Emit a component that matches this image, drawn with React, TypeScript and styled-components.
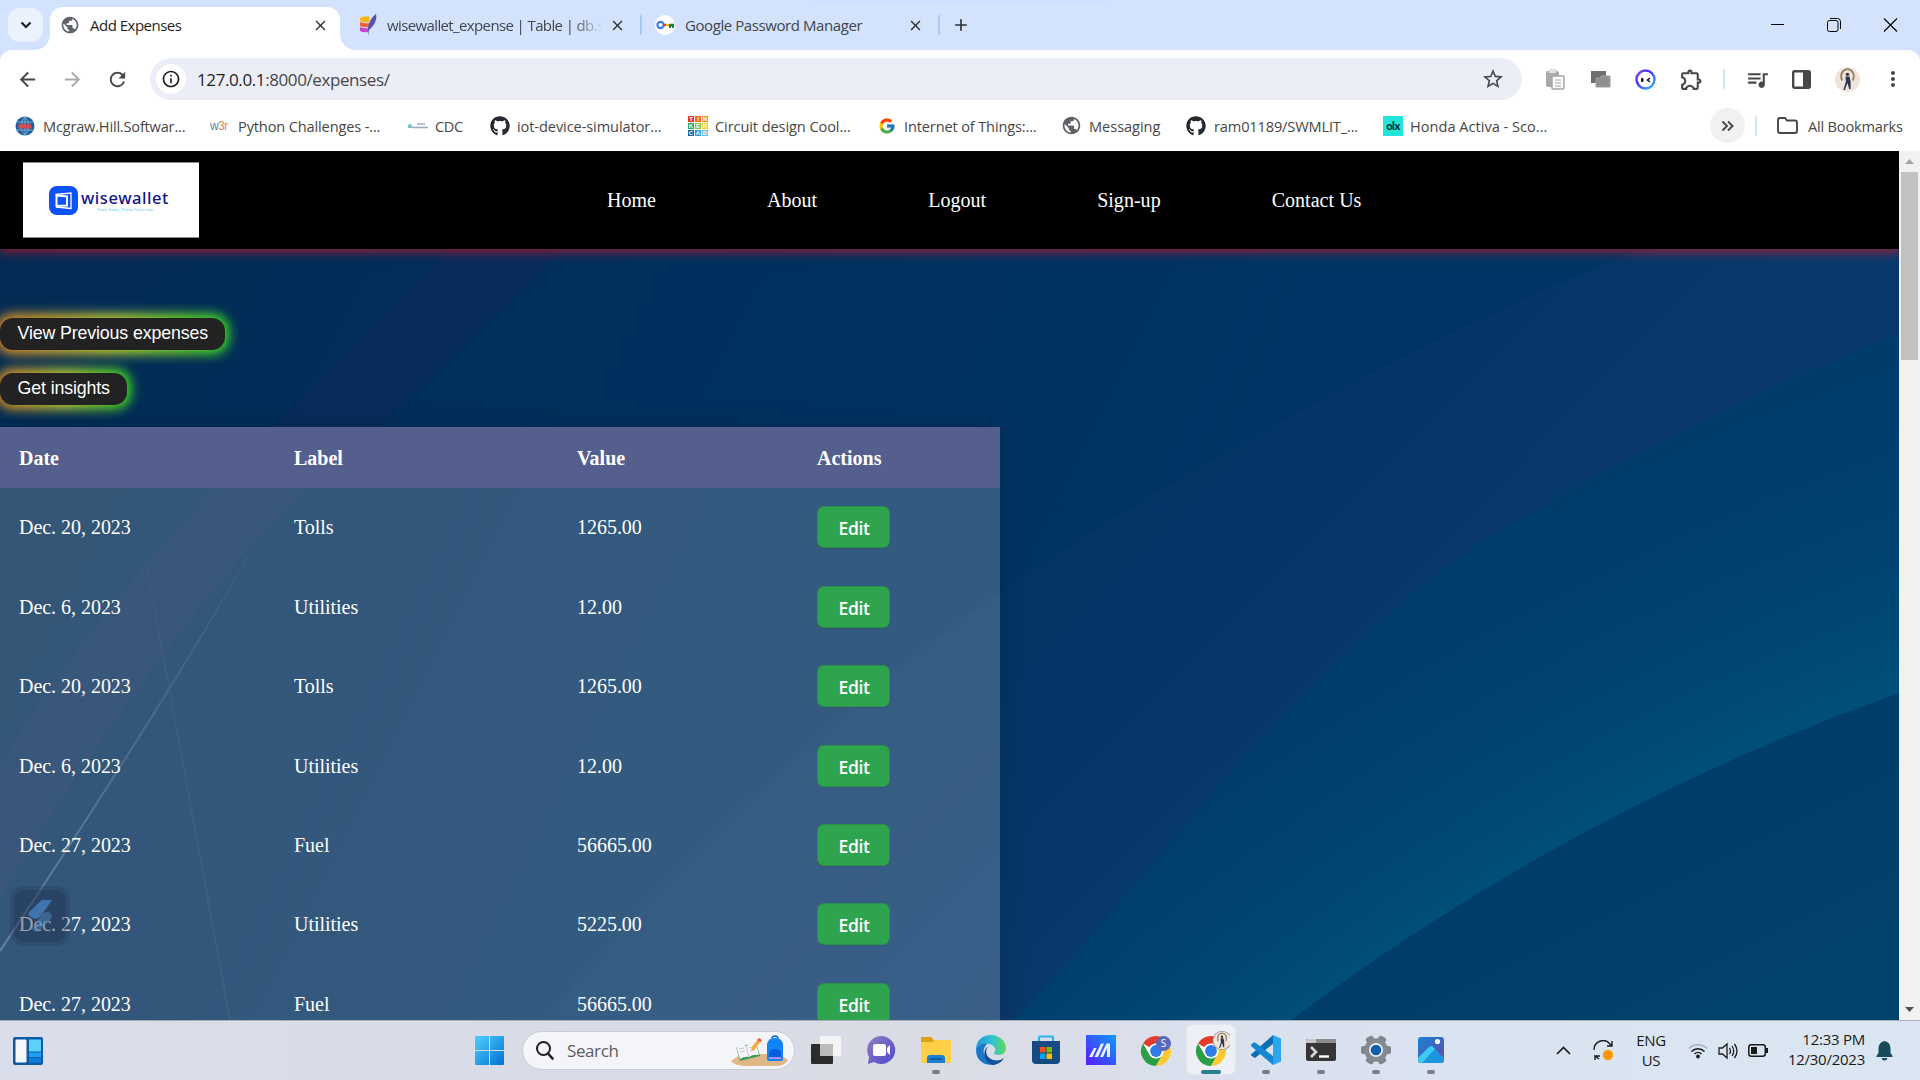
import React from 'react';
import styled, { createGlobalStyle, css } from 'styled-components';
import {
  MdArrowBack, MdArrowForward, MdRefresh, MdInfoOutline, MdStarBorder, MdOutlineExtension,
  MdQueueMusic, MdMoreVert, MdPublic, MdClose, MdAdd,
} from 'react-icons/md';
import { FaGithub } from 'react-icons/fa';
import { FcGoogle } from 'react-icons/fc';

const ui = `"Open Sans", "Noto Sans", sans-serif`;
const serif = `"Liberation Serif", "Times New Roman", serif`;

const Global = createGlobalStyle`
  * { box-sizing: border-box; }
  body { margin: 0; background: #d3e3fd; overflow: hidden; }
  svg { display: block; flex: none; }
  button { font: inherit; color: inherit; border: 0; background: none; padding: 0; }
`;

const Screen = styled.div`
  width: 1920px;
  height: 1080px;
  display: flex;
  flex-direction: column;
  overflow: hidden;
  font-family: ${ui};
  background: #d3e3fd;
`;

/* ---------- tab strip ---------- */
const TabStrip = styled.div`
  height: 50px;
  display: flex;
  align-items: center;
  padding-left: 8px;
  position: relative;
  &::after {
    content: '';
    position: absolute;
    left: 815px;
    top: 0;
    width: 290px;
    height: 3px;
    border-radius: 0 0 12px 12px;
    background: #cbdbf6;
    opacity: 0.6;
  }
`;
const TabSearch = styled.button`
  width: 35px;
  height: 34px;
  border-radius: 12px;
  background: #ebf2fe;
  display: grid;
  place-items: center;
`;
const Tab = styled.div<{ $w: number; $end?: number; $active?: boolean }>`
  width: ${p => p.$w}px;
  height: 43px;
  align-self: flex-end;
  display: flex;
  align-items: center;
  padding: 0 ${p => p.$end ?? 11}px 7px 10px;
  color: ${p => (p.$active ? '#1f1f1f' : '#41454c')};
  position: relative;
  ${p => p.$active && css`
    margin-left: 7px;
    background: #fff;
    border-radius: 13px 13px 0 0;
    &::before, &::after {
      content: '';
      position: absolute;
      bottom: 0;
      width: 15px;
      height: 15px;
    }
    &::before { right: 100%; background: radial-gradient(circle at 0 0, transparent 14.5px, #fff 15px); }
    &::after { left: 100%; background: radial-gradient(circle at 100% 0, transparent 14.5px, #fff 15px); }
  `}
`;
const TabTitle = styled.span<{ $ls: number; $fade?: boolean }>`
  flex: 1;
  margin-left: 10px;
  font-size: 15px;
  letter-spacing: ${p => p.$ls}px;
  white-space: nowrap;
  ${p => p.$fade && css`mask-image: linear-gradient(90deg, #000 186px, transparent 216px);`}
`;
const Divider = styled.i<{ $h?: number; $m?: string; $c?: string }>`
  width: 2px;
  height: ${p => p.$h ?? 20}px;
  margin: ${p => p.$m ?? '0'};
  background: ${p => p.$c ?? '#a8c7fa'};
  border-radius: 1px;
  flex: none;
`;
const WindowButtons = styled.div`
  margin-left: auto;
  display: flex;
  gap: 42px;
  padding-right: 22px;
`;

/* ---------- toolbar ---------- */
const Toolbar = styled.div`
  height: 58px;
  background: #fff;
  border-radius: 12px 12px 0 0;
  display: flex;
  align-items: center;
  padding-left: 16px;
  color: #474747;
`;
const NavIcons = styled.div`
  display: flex;
  gap: 22px;
  width: 134px;
`;
const Omnibox = styled.div`
  width: 1372px;
  height: 42px;
  border-radius: 21px;
  background: #ebeef7;
  display: flex;
  align-items: center;
  padding: 0 17px 0 6px;
`;
const InfoBadge = styled.span`
  width: 30px;
  height: 30px;
  border-radius: 50%;
  background: #fff;
  display: grid;
  place-items: center;
  color: #1f1f1f;
`;
const Url = styled.span`
  flex: 1;
  margin-left: 11px;
  font-size: 17px;
  letter-spacing: -0.4px;
  color: #474747;
  b { font-weight: 400; color: #1f1f1f; }
`;
const Extensions = styled.div`
  display: flex;
  align-items: center;
  padding-left: 22px;
`;
const Slot = styled.span<{ $w: number }>`
  width: ${p => p.$w}px;
  display: flex;
  justify-content: center;
  flex: none;
`;

/* ---------- bookmarks ---------- */
const Bookmarks = styled.div`
  height: 43px;
  background: #fff;
  display: flex;
  align-items: center;
  padding: 0 0 8px 15px;
  font-size: 14.6px;
  color: #474747;
`;
const Bookmark = styled.div<{ $w: number; $ls?: number; $gap?: number }>`
  width: ${p => p.$w}px;
  display: flex;
  align-items: center;
  gap: ${p => p.$gap ?? 8}px;
  line-height: 18px;
  white-space: nowrap;
  letter-spacing: ${p => p.$ls ?? -0.15}px;
`;
const More = styled.button`
  width: 35px;
  height: 35px;
  margin-left: auto;
  border-radius: 50%;
  background: #f1f1f1;
  display: grid;
  place-items: center;
`;
const W3r = styled.span`
  width: 20px;
  font: 12px "Liberation Sans", sans-serif;
  letter-spacing: -0.5px;
  color: #4a7fc0;
  em { font-style: normal; color: #ee8146; }
`;
const Tinker = styled.span`
  width: 20px;
  height: 20px;
  display: grid;
  grid-template-columns: repeat(3, 1fr);
  gap: 1px;
  font: bold 6px/6px "Liberation Sans", sans-serif;
  letter-spacing: 0;
  color: #fff;
  text-align: center;
`;
const TinkerCell = styled.i<{ $c: string }>`
  font-style: normal;
  background: ${p => p.$c};
`;
const Olx = styled.span`
  width: 20px;
  height: 20px;
  background: #23e5db;
  color: #002f34;
  font: 900 11px/19px "Lato", sans-serif;
  letter-spacing: -0.5px;
  text-align: center;
`;

/* ---------- web page ---------- */
const Viewport = styled.div`
  height: 869px;
  display: flex;
  overflow: hidden;
`;
const Page = styled.main`
  width: 1899px;
  position: relative;
  overflow: hidden;
  font-family: ${serif};
  font-size: 20px;
  color: #fff;
  isolation: isolate;
`;
const Wallpaper = styled.svg`
  position: absolute;
  inset: 0;
  z-index: -1;
`;
const Navbar = styled.nav`
  height: 98px;
  background: #000;
  box-shadow: 0 2px 10px 1px rgba(210, 20, 40, 0.7);
  display: flex;
  align-items: center;
  padding-left: 23px;
`;
const Logo = styled.div`
  width: 176px;
  height: 76px;
  background: #fff;
  border: solid #8a8a8a;
  border-width: 1px 0;
  display: flex;
  align-items: center;
  padding: 1px 0 0 26px;
`;
const LogoWords = styled.div`
  margin: 0 0 0 3px;
  display: flex;
  flex-direction: column;
  font-family: "Noto Sans", sans-serif;
`;
const LogoName = styled.span`
  font-size: 16.5px;
  line-height: 18px;
  font-weight: 500;
  letter-spacing: 0.55px;
  color: #14148a;
`;
const LogoTag = styled.span`
  margin-left: 16px;
  font-size: 4px;
  line-height: 5px;
  color: #5cc8f5;
  white-space: nowrap;
`;
const Links = styled.div`
  display: flex;
  gap: 111px;
  margin: 1px 0 0 408px;
`;
const NavLink = styled.a`
  white-space: nowrap;
  letter-spacing: 0.03px;
`;
const Actions = styled.div`
  padding-top: 69px;
  height: 178px;
  display: flex;
  flex-direction: column;
  align-items: flex-start;
  gap: 23px;
`;
const GlowButton = styled.button<{ $w: number }>`
  width: ${p => p.$w}px;
  height: 32px;
  flex: none;
  border-radius: 13px;
  background: #222;
  font: 17.8px/30px "Liberation Sans", Arial, sans-serif;
  padding: 0 0 2px 17.6px;
  text-align: left;
  white-space: nowrap;
  letter-spacing: -0.14px;
  position: relative;
  &::before {
    content: '';
    position: absolute;
    inset: -4px;
    z-index: -1;
    border-radius: 16px;
    background: linear-gradient(90deg, #e8871e, #c8d62b 50%, #35e01c);
    filter: blur(6px);
  }
`;
const Table = styled.table`
  width: 1000px;
  border-collapse: collapse;
  table-layout: fixed;
  box-shadow: 0 0 25px rgba(0, 0, 0, 0.15);
  background: rgba(255, 255, 255, 0.2);
`;
const HeadCell = styled.th<{ $w?: number }>`
  width: ${p => (p.$w ? `${p.$w}px` : 'auto')};
  height: 61px;
  padding: 1px 0 0 19px;
  text-align: left;
  background: #555f8e;
`;
const Cell = styled.td`
  height: 79.45px;
  padding: 0 0 0 19px;
  letter-spacing: -0.03px;
`;
const EditButton = styled.button`
  display: block;
  width: 73px;
  height: 42px;
  margin-top: -1px;
  border-radius: 7px;
  border: 1px solid rgba(27, 31, 35, 0.15);
  box-shadow: 0 1px 0 rgba(27, 31, 35, 0.1);
  background: #2ea44f;
  font: 600 17.5px/40px ${ui};
  letter-spacing: -0.4px;
  padding: 1px 0 0 1px;
`;
const FloatingTool = styled.div`
  position: absolute;
  left: 10px;
  top: 735px;
  width: 60px;
  height: 60px;
  border-radius: 14px;
  border: 4px solid rgba(35, 55, 88, 0.3);
  background: rgba(28, 44, 74, 0.45);
  background-clip: padding-box;
  display: grid;
  place-items: center;
`;
const Scrollbar = styled.div`
  width: 21px;
  background: #f1f1f1;
  display: flex;
  flex-direction: column;
  align-items: center;
`;
const ScrollArrow = styled.span<{ $c: string; $up?: boolean }>`
  height: 21px;
  display: grid;
  place-items: center;
  margin-top: ${p => (p.$up ? 0 : 'auto')};
  color: ${p => p.$c};
`;
const Thumb = styled.div`
  width: 17px;
  height: 188px;
  background: #c1c1c1;
`;

/* ---------- taskbar ---------- */
const Taskbar = styled.footer`
  height: 60px;
  border-top: 1px solid #a9adb8;
  background: linear-gradient(90deg, #d9deea 0%, #d8dce7 30%, #dadce5 48%, #dae0ed 62%, #dae5f2 85%, #dbe6f2 100%);
  display: flex;
  align-items: center;
  color: #1b1b1b;
`;
const StartArea = styled.div`
  width: 475px;
  padding-left: 13px;
`;
const Search = styled.div`
  width: 273px;
  height: 39px;
  margin: 0 0 0 18px;
  border-radius: 20px;
  background: #f4f5f8;
  border: 1px solid #c9ccd5;
  display: flex;
  align-items: center;
  padding: 0 6px 0 12px;
  font-size: 17px;
  color: #5d5d5f;
  span { flex: 1; margin-left: 13px; letter-spacing: -0.4px; }
`;
const TaskButton = styled.div<{ $active?: boolean }>`
  width: 48px;
  height: 49px;
  margin: 0 0 2px 7px;
  border-radius: 6px;
  flex: none;
  display: grid;
  place-items: center;
  position: relative;
  ${p => p.$active && css`background: #edf0f6; box-shadow: 0 0 0 1px #e3e6ed;`}
`;
const Dot = styled.i<{ $active?: boolean }>`
  position: absolute;
  bottom: 0;
  left: ${p => (p.$active ? 14 : 20)}px;
  width: ${p => (p.$active ? 20 : 8)}px;
  height: 4px;
  border-radius: 2px;
  background: ${p => (p.$active ? '#25808f' : '#7b7d82')};
`;
const Tray = styled.div`
  margin-left: auto;
  padding-right: 27px;
  display: flex;
  align-items: center;
  font-size: 15px;
  line-height: 20px;
`;
const Lang = styled.div`
  width: 40px;
  margin: 0 17px 0 -4px;
  padding-bottom: 2px;
  text-align: center;
  letter-spacing: -0.4px;
`;
const Clock = styled.div`
  width: 86px;
  margin: 0 11px 0 10px;
  padding-bottom: 3px;
  text-align: right;
  white-space: nowrap;
  letter-spacing: -0.25px;
`;

/* ---------- drawings ---------- */
const Chrome = ({ children }: { children?: React.ReactNode }) => (
  <svg width="38" height="38" viewBox="-4 -5 38 38">
    <circle cx="15" cy="15" r="15" fill="#fff" />
    <path d="M15 15 2 7.500A15 15 0 0 1 28 7.500H15A7.500 7.500 0 0 0 8.500 11Z" fill="#e33b2e" />
    <path d="M2 7.500A15 15 0 0 0 15 30L21.500 18.750A7.500 7.500 0 0 1 8.500 18.750Z" fill="#2a9d47" />
    <path d="M28 7.500A15 15 0 0 1 15 30L21.500 18.750A7.500 7.500 0 0 0 15 7.500Z" fill="#fcc934" />
    <circle cx="15" cy="15" r="7.300" fill="#fff" />
    <circle cx="15" cy="15" r="5.900" fill="#2f7de9" />
    {children}
  </svg>
);

const Person = ({ x, y, r }: { x: number; y: number; r: number }) => (
  <g transform={`translate(${x} ${y}) scale(${r / 12})`}>
    <circle r="12" fill="#efe3dc" />
    <path d="M-5 1C-8-5-4-10-0-10S8-5 5 1" fill="none" stroke="#8b8462" strokeWidth="1.800" />
    <circle cy="-5" r="1.600" fill="#3b2a25" />
    <path d="M-2-3 2-3 3 2 3 9 1.500 9 0 3-2.500 10-4 10-1.500 2Z" fill="#2d3654" />
  </g>
);

const taskApps: { id: string; dot?: boolean; active?: boolean; icon: React.ReactNode }[] = [
  { id: 'taskview', icon: (
    <svg width="32" height="30"><rect x="1" y="9" width="22" height="20" rx="1" fill="#2c2c2b" /><rect x="10" y="1" width="21" height="20" rx="1" fill="#f4f4f5" /><rect x="10" y="9" width="13" height="12" fill="#bcbcbc" /></svg>) },
  { id: 'chat', icon: (
    <svg width="30" height="30"><defs><linearGradient id="ch" x2="1" y2="1"><stop stopColor="#8d82c2" /><stop offset=".6" stopColor="#6a5cc8" /><stop offset="1" stopColor="#4750c4" /></linearGradient></defs>
      <path d="M15 1a14 14 0 1 1-7 26L2 29 3 22A14 14 0 0 1 15 1Z" fill="url(#ch)" /><rect x="7" y="9" width="13" height="12" rx="2" fill="#fff" /><path d="m21 13 3-3v10l-3-3Z" fill="#fff" /></svg>) },
  { id: 'explorer', dot: true, icon: (
    <svg width="30" height="28"><path d="M0 2Q0 1 1 1H10L13 4H29Q30 4 30 5V12H0Z" fill="#dfa00b" /><path d="M0 6H11L14 4H29Q30 4 30 5V26Q30 27 29 27H1Q0 27 0 26Z" fill="#ffcf48" /><path d="M6 27V22Q6 19 9 19H21Q24 19 24 22V27Z" fill="#1c7fd0" /><path d="M9 23H21" stroke="#0b5796" strokeWidth="1.500" /></svg>) },
  { id: 'edge', icon: (
    <svg width="30" height="30"><defs><linearGradient id="e1" x2="1"><stop stopColor="#2196dc" /><stop offset=".55" stopColor="#2fc2cf" /><stop offset="1" stopColor="#63dc55" /></linearGradient></defs>
      <path d="M0 15C0 5 7 0 15 0S30 6 30 13C30 18 26 20 23 20S18 19 18 18 20 16 19 13C17 9 12 8 8 9S1 12 0 15Z" fill="url(#e1)" />
      <path d="M0 15C1 11 6 8 11 9C8 12 7 15 8 19C10 25 15 28 20 29C11 32 0 27 0 15Z" fill="#1b78c8" /><path d="M12 11C8 17 11 23 17 25 22 26 26 25 28 22.500 26 28 20 30 16 30 9 27 5 17 12 11Z" fill="#12509c" /></svg>) },
  { id: 'store', icon: (
    <svg width="30" height="30"><path d="M8 7V2.500Q8 1.500 9 1.500H21Q22 1.500 22 2.500V7" fill="none" stroke="#29b4ee" strokeWidth="2.200" /><path d="M1 6H29V25Q29 29 25 29H5Q1 29 1 25Z" fill="#174a80" /><path d="M9 12h5.500v5.500H9z" fill="#f25022" /><path d="M15.500 12H21v5.500h-5.500z" fill="#7fba00" /><path d="M9 18.500h5.500V24H9z" fill="#00a4ef" /><path d="M15.500 18.500H21V24h-5.500z" fill="#ffb900" /></svg>) },
  { id: 'myasus', icon: (
    <svg width="30" height="30"><defs><linearGradient id="ma" x1="1" x2="0" y2="1"><stop stopColor="#0c9cfb" /><stop offset="1" stopColor="#5a18ff" /></linearGradient></defs><rect width="30" height="30" fill="url(#ma)" /><path d="M3 22H6.500L10.500 13H8ZM8.500 22H12L18 8.500H15ZM14 22H17L21 13V22H24V8.500H20.500Z" fill="#e9f1ff" /></svg>) },
  { id: 'chrome', icon: <Chrome><circle cx="22.500" cy="7.500" r="7.500" fill="#5667bd" /><text x="22.500" y="11" fontSize="10" fill="#fff" textAnchor="middle" fontFamily="Open Sans">S</text></Chrome> },
  { id: 'chrome-active', dot: true, active: true, icon: <Chrome><circle cx="26" cy="4.500" r="9.500" fill="#777" /><Person x={26} y={4.5} r={8.9} /></Chrome> },
  { id: 'vscode', dot: true, icon: (
    <svg width="30" height="30"><path d="M22 0 22 9 4 23 0 20.500V19.500L22 0Z" fill="#0a6fb7" /><path d="M0 9.500 3.500 7 22 21V30L0 11Z" fill="#1587d2" /><path d="M22 0 30 3.500V26.500L22 30Z" fill="#2aa5ee" /></svg>) },
  { id: 'terminal', dot: true, icon: (
    <svg width="30" height="24"><rect y="1" width="30" height="22" rx="2" fill="#353535" /><path d="M0 5V3Q0 1 2 1H28Q30 1 30 3V5Z" fill="#8b8b8b" /><path d="M0 5V3Q0 1 2 1H10V5Z" fill="#c8c8c8" /><path d="m5 9 5 5-5 5" fill="none" stroke="#d8d8d8" strokeWidth="2.600" /><path d="M13 18.500H23" stroke="#fff" strokeWidth="2.400" /></svg>) },
  { id: 'settings', dot: true, icon: (
    <svg width="32" height="32" viewBox="-16 -16 32 32">{[30, 90, 150].map(a => <rect key={a} x="-4" y="-15" width="8" height="30" rx="2" fill="#7f858b" transform={`rotate(${a})`} />)}<circle r="11.800" fill="#848a90" /><circle r="7" fill="#eef1f5" /><circle r="5.300" fill="#0f5fae" /></svg>) },
  { id: 'photos', dot: true, icon: (
    <svg width="26" height="26"><defs><linearGradient id="ph" x2="1" y2="1"><stop stopColor="#1786d6" /><stop offset=".7" stopColor="#4d58b5" /><stop offset="1" stopColor="#8650b4" /></linearGradient><clipPath id="pc"><rect width="26" height="26" rx="3" /></clipPath></defs><g clipPath="url(#pc)"><rect width="26" height="26" fill="url(#ph)" /><path d="M-1 22 11 10Q13 8 15 10L27 22V27H-1Z" fill="#1d95de" /><path d="M-1 22 11 10Q13 8 15 10L17 12 3 27H-1Z" fill="#3dcbf5" /><circle cx="19.500" cy="4.500" r="2.600" fill="#f2f7fc" /></g></svg>) },
];

const rows = [
  ['Dec. 20, 2023', 'Tolls', '1265.00'],
  ['Dec. 6, 2023', 'Utilities', '12.00'],
  ['Dec. 20, 2023', 'Tolls', '1265.00'],
  ['Dec. 6, 2023', 'Utilities', '12.00'],
  ['Dec. 27, 2023', 'Fuel', '56665.00'],
  ['Dec. 27, 2023', 'Utilities', '5225.00'],
  ['Dec. 27, 2023', 'Fuel', '56665.00'],
];

const tinker: [string, string][] = [
  ['T', '#e8392a'], ['I', '#ef6a2a'], ['N', '#f39a2f'], ['K', '#22a663'], ['E', '#8cc63f'], ['R', '#f0d229'], ['C', '#1265a5'], ['A', '#2b9ad6'], ['D', '#6cc0e8'],
];

const Backdrop = () => (
  <Wallpaper width="1899" height="869" viewBox="0 151 1899 869">
    <defs>
      <linearGradient id="base" x1="0" y1="151" x2="1100" y2="700" gradientUnits="userSpaceOnUse"><stop stopColor="#032b52" /><stop offset=".4" stopColor="#002e5b" /><stop offset="1" stopColor="#003464" /></linearGradient>
      <linearGradient id="violet" x1="1100" y1="450" x2="1350" y2="700" gradientUnits="userSpaceOnUse"><stop stopColor="#033464" /><stop offset=".6" stopColor="#063668" /><stop offset="1" stopColor="#09396b" /></linearGradient>
      <radialGradient id="teal" cx="2710" cy="2838" r="2640" gradientUnits="userSpaceOnUse"><stop offset=".87" stopColor="#004f7a" /><stop offset=".9" stopColor="#004774" /><stop offset=".94" stopColor="#00406e" /><stop offset=".985" stopColor="#003c6b" /></radialGradient>
      <linearGradient id="deep" x1="1600" y1="820" x2="1720" y2="1060" gradientUnits="userSpaceOnUse"><stop stopColor="#003d69" /><stop offset="1" stopColor="#02436b" /></linearGradient>
      <linearGradient id="ray" x1="263" y1="527" x2="0" y2="951" gradientUnits="userSpaceOnUse"><stop stopColor="#6f94b5" stopOpacity="0" /><stop offset="1" stopColor="#7d9db9" stopOpacity=".5" /></linearGradient>
      <linearGradient id="ray2" x1="147" y1="568" x2="230" y2="1020" gradientUnits="userSpaceOnUse"><stop stopColor="#4a688d" stopOpacity=".08" /><stop offset="1" stopColor="#4a688d" stopOpacity=".22" /></linearGradient>
    </defs>
    <rect y="151" width="1899" height="869" fill="url(#base)" />
    <path d="M450 249 273 427Q90 610 0 765V900Q80 760 190 620T380 427L565 249Z" fill="#0c2c5b" opacity=".7" />
    <path d="M1640 249Q1419 340 1174 482T765 787Q650 890 545 1020H1899V249Z" fill="url(#violet)" />
    <path d="M1899 333Q1695 415 1480 542C1340 640 1220 780 1092 935L1015 1020H1899Z" fill="url(#teal)" />
    <path d="M1291 1020A2300 2300 0 0 1 1899 693V1020Z" fill="url(#deep)" />
    <path d="M275 507Q200 650 0 951" fill="none" stroke="url(#ray)" strokeWidth="2" />
    <path d="M147 568 230 1020" stroke="url(#ray2)" strokeWidth="1.500" />
  </Wallpaper>
);

const PasswordIcon = () => (
  <svg width="20" height="20"><circle cx="10" cy="10" r="10" fill="#fff" /><circle cx="5.500" cy="10" r="3.100" fill="none" stroke="#3b7ded" strokeWidth="2.200" /><path d="M8.500 10H11" stroke="#e94335" strokeWidth="2.400" /><path d="M11 10H14" stroke="#fbbc04" strokeWidth="2.400" /><path d="M14 8.800H19V13H17V11.500H16V13H14Z" fill="#188038" /></svg>
);

const TabClose = () => <MdClose size={17} color="#303134" />;

export default function App() {
  return (
    <Screen>
      <Global />
      <TabStrip>
        <TabSearch><svg width="12" height="8"><path d="M1.500 1.500 6 6 10.500 1.500" fill="none" stroke="#1f1f1f" strokeWidth="2.200" /></svg></TabSearch>
        <Tab $w={290} $active>
          <MdPublic size={20} color="#5f6368" />
          <TabTitle $ls={-0.5}>Add Expenses</TabTitle>
          <TabClose />
        </Tab>
        <Tab $w={300} $end={14}>
          <Slot $w={9} />
          <svg width="18" height="22"><path d="M1 4Q5 1 11 3L10 8Q5 9 1 7Z" fill="#fbb716" /><path d="M1 8Q6 10 11 9L10 13Q5 14 1 12Z" fill="#f4603e" /><path d="M1 13Q6 15 10 14L9 18Q4 19 1 17Z" fill="#c945c9" /><path d="M17 0Q19 8 10 16L9 22 9 13Q11 4 17 0Z" fill="#5e4fb3" /></svg>
          <TabTitle $ls={-0.62} $fade>wisewallet_expense | Table | db.s</TabTitle>
          <TabClose />
        </Tab>
        <Divider />
        <Tab $w={297} $end={15}>
          <Slot $w={3} />
          <PasswordIcon />
          <TabTitle $ls={-0.42}>Google Password Manager</TabTitle>
          <TabClose />
        </Tab>
        <Divider $m="0 11px 0 -1px" />
        <MdAdd size={20} color="#303134" />
        <WindowButtons>
          <svg width="14" height="14"><path d="M0 6.500H13" stroke="#000" /></svg>
          <svg width="14" height="14"><rect x=".5" y="2.500" width="10.500" height="11" rx="2" fill="none" stroke="#000" /><path d="M3 .5H10.500Q13.500 .5 13.500 3.500V11" fill="none" stroke="#000" /></svg>
          <svg width="15" height="14"><path d="M1 .5 14 13.500M14 .5 1 13.500" stroke="#000" strokeWidth="1.100" /></svg>
        </WindowButtons>
      </TabStrip>

      <Toolbar>
        <NavIcons>
          <MdArrowBack size={23} /><MdArrowForward size={23} color="#a9abae" /><MdRefresh size={23} />
        </NavIcons>
        <Omnibox>
          <InfoBadge><MdInfoOutline size={20} /></InfoBadge>
          <Url><b>127.0.0.1</b>:8000/expenses/</Url>
          <MdStarBorder size={24} />
        </Omnibox>
        <Extensions>
          <Slot $w={22}><svg width="20" height="21"><rect x="1" y="2" width="13" height="16" rx="2" fill="#a9a9a9" /><rect x="4" width="7" height="4" fill="#e0e0e0" /><rect x="7" y="7" width="12" height="13" rx="1" fill="#fff" stroke="#a5a5a5" strokeWidth="1.500" /><path d="M10 11H16M10 14H16M10 17H16" stroke="#a5a5a5" /></svg></Slot>
          <Slot $w={69}><svg width="20" height="18"><path d="M0 1H15V13H0Z" fill="#707070" /><path d="M5 17V8H10V6H19V17Z" fill="#909090" stroke="#9f9f9f" /></svg></Slot>
          <Slot $w={21}><svg width="21" height="21"><defs><linearGradient id="fc" x2="1" y2="1"><stop stopColor="#8a3df5" /><stop offset=".4" stopColor="#4b35ff" /><stop offset="1" stopColor="#2cc6f2" /></linearGradient></defs><circle cx="10.500" cy="10.500" r="9" fill="#fff" stroke="url(#fc)" strokeWidth="2.500" /><rect x="6" y="9" width="2.500" height="4" rx="1" fill="#111" /><path d="m15 9-2.500 2 2.500 2" fill="none" stroke="#111" strokeWidth="1.600" /></svg></Slot>
          <Slot $w={71}><MdOutlineExtension size={25} /></Slot>
          <Divider $m="0 0 0 -4px" $c="#d3e3fd" />
          <Slot $w={65}><MdQueueMusic size={25} /></Slot>
          <Slot $w={23}><svg width="19" height="19"><rect x="1.200" y="1.200" width="16.600" height="16.600" rx="1.500" fill="none" stroke="#474747" strokeWidth="2.400" /><path d="M11 1H18V18H11Z" fill="#474747" /></svg></Slot>
          <Slot $w={68}><svg width="25" height="25"><Person x={12.5} y={12.5} r={12.5} /></svg></Slot>
          <MdMoreVert size={24} />
        </Extensions>
      </Toolbar>

      <Bookmarks>
        <Bookmark $w={195} $ls={-0.2}>
          <svg width="20" height="20"><circle cx="10" cy="10" r="9.500" fill="#205f9e" /><path d="M1 6H19M1 14H19M10 0V20M10 .5Q2 10 10 19.500M10 .5Q18 10 10 19.500" fill="none" stroke="#8bbadc" strokeWidth=".8" /><path d="M3 9 7 7 10 9 15 7 17 12 12 13 8 12 4 13Z" fill="#d64a50" /></svg>
          Mcgraw.Hill.Softwar...
        </Bookmark>
        <Bookmark $w={198}><W3r>w<em>3r</em></W3r>Python Challenges -...</Bookmark>
        <Bookmark $w={82} $ls={-0.4} $gap={7}>
          <svg width="20" height="6"><path d="M0 3Q0 1 2 1T4 3L5 5H0Z" fill="#88b7d1" /><path d="M9 1H17" stroke="#8d9ab5" strokeWidth="1.200" /><path d="M5 4.500H20" stroke="#9aaac6" strokeWidth="1.600" /></svg>
          CDC
        </Bookmark>
        <Bookmark $w={198} $ls={-0.1} $gap={7}><FaGithub size={20} color="#24292f" />iot-device-simulator...</Bookmark>
        <Bookmark $w={190} $ls={-0.1} $gap={7}><Tinker>{tinker.map(([l, c]) => <TinkerCell key={l} $c={c}>{l}</TinkerCell>)}</Tinker>Circuit design Cool...</Bookmark>
        <Bookmark $w={183}><FcGoogle size={18} />Internet of Things:...</Bookmark>
        <Bookmark $w={125} $gap={7} $ls={-0.05}><MdPublic size={21} color="#5f6368" />Messaging</Bookmark>
        <Bookmark $w={197}><FaGithub size={20} color="#24292f" />ram01189/SWMLIT_...</Bookmark>
        <Bookmark $w={180} $ls={0} $gap={7}><Olx>olx</Olx>Honda Activa - Sco...</Bookmark>
        <More><svg width="13" height="12"><path d="M1.500 1.500 6 6 1.500 10.500M7 1.500 11.500 6 7 10.500" fill="none" stroke="#474747" strokeWidth="1.900" /></svg></More>
        <Divider $m="0 20px 0 10px" $c="#d3e3fd" />
        <Bookmark $w={143} $ls={-0.2} $gap={10}><svg width="21" height="17"><path d="M1 3Q1 1 3 1H8L10 3.500H18Q20 3.500 20 5.500V14Q20 16 18 16H3Q1 16 1 14Z" fill="none" stroke="#474747" strokeWidth="1.900" /></svg>All Bookmarks</Bookmark>
      </Bookmarks>

      <Viewport>
        <Page>
          <Backdrop />
          <Navbar>
            <Logo>
              <svg width="29" height="29"><rect width="29" height="29" rx="8" fill="#0b52fb" /><path d="M7.500 9.500 18 10.500V19.500L7.500 20Z" fill="none" stroke="#fff" strokeWidth="2" /><path d="M6.500 8.500 22 7V22.500L7 21" fill="none" stroke="#fff" strokeWidth="1.300" /></svg>
              <LogoWords><LogoName>wisewallet</LogoName><LogoTag>Track Today, Thrive Tomorrow</LogoTag></LogoWords>
            </Logo>
            <Links>{['Home', 'About', 'Logout', 'Sign-up', 'Contact Us'].map(l => <NavLink key={l}>{l}</NavLink>)}</Links>
          </Navbar>
          <Actions>
            <GlowButton $w={225}>View Previous expenses</GlowButton>
            <GlowButton $w={127}>Get insights</GlowButton>
          </Actions>
          <Table>
            <thead>
              <tr><HeadCell $w={275}>Date</HeadCell><HeadCell $w={283}>Label</HeadCell><HeadCell $w={240}>Value</HeadCell><HeadCell>Actions</HeadCell></tr>
            </thead>
            <tbody>
              {rows.map((r, i) => (
                <tr key={i}>{r.map(c => <Cell key={c}>{c}</Cell>)}<Cell><EditButton>Edit</EditButton></Cell></tr>
              ))}
            </tbody>
          </Table>
          <FloatingTool>
            <svg width="28" height="34"><path d="M16 1H26L15 17Q10 22 5 18 0 15 4 12Z" fill="#3d74ad" /><path d="M15 17Q19 11 24 14 28 17 24 21L13 32Q9 34 6 30L9 25Z" fill="#5487bb" opacity=".5" /></svg>
          </FloatingTool>
        </Page>
        <Scrollbar>
          <ScrollArrow $c="#a3a3a3" $up><svg width="9" height="5"><path d="M0 5 4.500 0 9 5Z" fill="currentColor" /></svg></ScrollArrow>
          <Thumb />
          <ScrollArrow $c="#505050"><svg width="9" height="5"><path d="M0 0H9L4.500 5Z" fill="currentColor" /></svg></ScrollArrow>
        </Scrollbar>
      </Viewport>

      <Taskbar>
        <StartArea>
          <svg width="30" height="28"><rect width="30" height="28" rx="2" fill="#0d5aa7" /><rect x="2.500" y="2.500" width="11" height="23" rx="1" fill="#f5f8fb" /><rect x="16" y="2.500" width="12" height="12" fill="#5cd2fb" /><rect x="16" y="15.500" width="12" height="4.500" fill="#1ea0f2" /><rect x="16" y="21" width="12" height="4.500" fill="#0b7ce0" /></svg>
        </StartArea>
        <svg width="29" height="29"><defs><linearGradient id="win" x2="1" y2="1"><stop stopColor="#4fcfff" /><stop offset="1" stopColor="#0070d3" /></linearGradient></defs><path d="M0 1Q0 0 1 0H14V14H0ZM15 0H28Q29 0 29 1V14H15ZM0 15H14V29H1Q0 29 0 28ZM15 15H29V28Q29 29 28 29H15Z" fill="url(#win)" /></svg>
        <Search>
          <svg width="19" height="19"><circle cx="8.500" cy="7.500" r="6.500" fill="none" stroke="#1f1f1f" strokeWidth="2" /><path d="m13 12.500 4.500 5" stroke="#1f1f1f" strokeWidth="2.600" strokeLinecap="round" /></svg>
          <span>Search</span>
          <svg width="57" height="32">
            <path d="M0 26 10 19H48L57 25Q54 31 44 31H16Q4 31 0 26Z" fill="#dfb787" />
            <path d="M5 12 25 8 29 21 9 26Z" fill="#3f9b58" /><path d="M5 11Q11 8 15 11 20 7 25 8L28 20Q22 19 18 22 13 21 9 24Z" fill="#f8f6fb" /><path d="m15 11 3 11M8 14l5-1M9 17l5-1M18 13l5-1M19 16l5-1" stroke="#b9b3cc" strokeWidth=".8" />
            <path d="m20 16 1-4 6-8 3 2-6 8Z" fill="#f6a83b" /><path d="m26 5 2-2 3 2-1 2Z" fill="#ee5a52" />
            <path d="M41 4Q41 1 44 1T47 4" fill="none" stroke="#0b62d8" strokeWidth="1.500" /><path d="M36 24V9Q37 3 44 3T52 9V24Q52 26 50 26H38Q36 26 36 24Z" fill="#1085f5" /><path d="M38 22V18Q39 14 44 14T50 18V22Z" fill="#0760d9" /><path d="M38 22H50V24H38Z" fill="#b78cf2" />
          </svg>
        </Search>
        {taskApps.map(a => <TaskButton key={a.id} $active={a.active}>{a.icon}{a.dot && <Dot $active={a.active} />}</TaskButton>)}
        <Tray>
          <svg width="15" height="9"><path d="M1 8 7.500 1.500 14 8" fill="none" stroke="#1b1b1b" strokeWidth="1.700" /></svg>
          <Slot $w={64}><svg width="21" height="21"><path d="M1 10A9 9 0 0 1 17 4L19 6M19 1V6H14M6 19 2 16V20M2 16H7" fill="none" stroke="#1b1b1b" strokeWidth="1.400" /><circle cx="15" cy="15" r="5.200" fill="#fc9805" /></svg></Slot>
          <Lang>ENG<br />US</Lang>
          <svg width="20" height="16" viewBox="0 0 20 16" fill="none" strokeWidth="1.500"><path d="M.8 5.500A13 13 0 0 1 19.200 5.500" stroke="#a9afb7" /><path d="M3.500 8.500A9 9 0 0 1 16.500 8.500M6.500 11A5 5 0 0 1 13.500 11" stroke="#1b1b1b" /><circle cx="10" cy="13.500" r="1.900" fill="#1b1b1b" /></svg>
          <Slot $w={40}><svg width="21" height="18" fill="none" stroke="#1b1b1b" strokeWidth="1.300"><path d="M1 6H4.500L9 2V16L4.500 12H1Z" /><path d="M11.500 6Q13.500 9 11.500 12M14 4Q17.500 9 14 14M16.500 2Q21.500 9 16.500 16" /></svg></Slot>
          <svg width="21" height="13"><rect x=".8" y=".8" width="16.500" height="11.400" rx="2.500" fill="none" stroke="#1b1b1b" strokeWidth="1.500" /><rect x="3" y="3" width="6" height="7" fill="#1b1b1b" /><path d="M18 4H20V9H18Z" fill="#1b1b1b" /></svg>
          <Clock>12:33 PM<br />12/30/2023</Clock>
          <svg width="17" height="20"><path d="M8.500 0Q14.500 1 14.500 8V12L16.500 15V16H.5V15L2.500 12V8Q2.500 1 8.500 0ZM5.500 17H11.500Q11 19.500 8.500 19.500T5.500 17Z" fill="#174a5a" /></svg>
        </Tray>
      </Taskbar>
    </Screen>
  );
}
